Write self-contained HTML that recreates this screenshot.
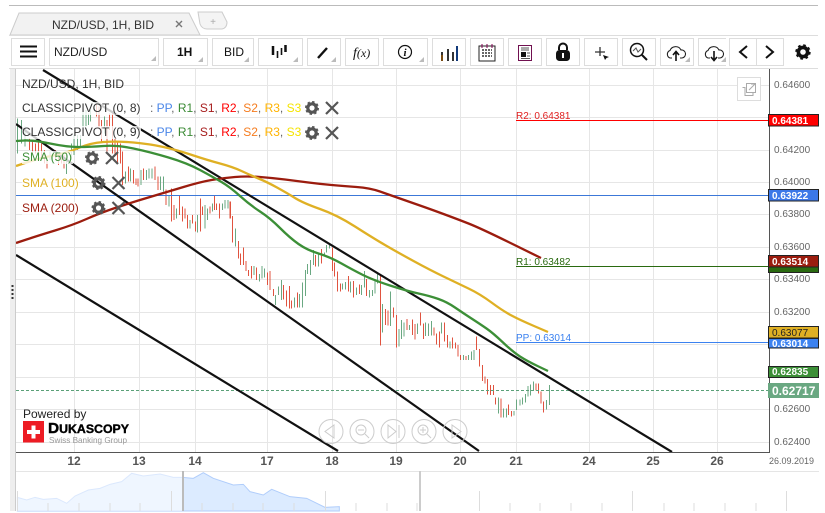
<!DOCTYPE html>
<html>
<head>
<meta charset="utf-8">
<style>
html,body{margin:0;padding:0;background:#fff;width:825px;height:513px;overflow:hidden}
svg{display:block}
text{font-family:"Liberation Sans",Arial,sans-serif}
</style>
</head>
<body>
<svg width="825" height="513" viewBox="0 0 825 513" xmlns="http://www.w3.org/2000/svg">
<defs>
<clipPath id="chart"><rect x="16" y="69" width="753" height="383"/></clipPath>
<g id="gear"><circle r="4.2" fill="none" stroke="#555" stroke-width="3.2"/><circle r="6" fill="none" stroke="#555" stroke-width="2" stroke-dasharray="2.4 2.3"/></g>
<g id="cross"><path d="M-6 -6L6 6M6 -6L-6 6" stroke="#555" stroke-width="2.2" fill="none"/></g>
<path id="tri" d="M0 5L5 5L5 0Z" fill="#bbb"/>
</defs>

<!-- top chrome -->
<rect x="9" y="5" width="809" height="1" fill="#bbb"/>
<path d="M10 35L19 13H189L200 35Z" fill="#f2f2f2" stroke="#ccc"/>
<path d="M198 12H222L227 22Q227 28 222 29H207Q202 29 200 24Z" fill="#f4f4f4" stroke="#ccc"/>
<text x="213" y="25" font-size="10" fill="#aaa" text-anchor="middle">+</text>
<text x="52" y="29" font-size="12" fill="#333">NZD/USD, 1H, BID</text>
<path d="M176 21L182 27M182 21L176 27" stroke="#777" stroke-width="1.4"/>
<rect x="9" y="35" width="809" height="1" fill="#ddd"/>

<!-- toolbar buttons -->
<g fill="#fff" stroke="#ddd">
<rect x="11.5" y="38.5" width="33" height="27"/>
<rect x="49.5" y="38.5" width="109" height="27"/>
<rect x="163.5" y="38.5" width="44" height="27"/>
<rect x="212.5" y="38.5" width="41" height="27"/>
<rect x="258.5" y="38.5" width="44" height="27"/>
<rect x="307.5" y="38.5" width="33" height="27"/>
<rect x="345.5" y="38.5" width="33" height="27"/>
<rect x="383.5" y="38.5" width="44" height="27"/>
<rect x="432.5" y="38.5" width="33" height="27"/>
<rect x="470.5" y="38.5" width="33" height="27"/>
<rect x="508.5" y="38.5" width="33" height="27"/>
<rect x="546.5" y="38.5" width="33" height="27"/>
<rect x="584.5" y="38.5" width="33" height="27"/>
<rect x="622.5" y="38.5" width="33" height="27"/>
<rect x="660.5" y="38.5" width="33" height="27"/>
<rect x="698.5" y="38.5" width="33" height="27"/>
<rect x="729.5" y="38.5" width="27" height="27"/>
<rect x="756.5" y="38.5" width="27" height="27"/>
</g>
<rect x="726" y="38" width="3" height="28" fill="#fff"/>
<rect x="9" y="68" width="809" height="1" fill="#ddd"/>
<use href="#tri" x="151" y="56"/><use href="#tri" x="198" y="57"/><use href="#tri" x="244" y="57"/><use href="#tri" x="293" y="57"/><use href="#tri" x="331" y="57"/><use href="#tri" x="419" y="57"/><use href="#tri" x="685" y="57"/><use href="#tri" x="721" y="57"/>

<path d="M20 46.5H37M20 51.5H37M20 56.5H37" stroke="#111" stroke-width="2"/>
<text x="54" y="56" font-size="12" fill="#222">NZD/USD</text>
<text x="177" y="56" font-size="12" font-weight="bold" fill="#111">1H</text>
<text x="224" y="56" font-size="12" fill="#111">BID</text>
<path d="M273 46V55M285.500 45V52" stroke="#111" stroke-width="2.500"/>
<path d="M277.500 51V58M281.500 48V55" stroke="#111" stroke-width="1.600"/>
<path d="M318 58L327 48" stroke="#111" stroke-width="2.400"/>
<text x="353" y="57" font-size="12" font-style="italic" fill="#111" style="font-family:'Liberation Serif',serif"><tspan font-size="14">f</tspan>(x)</text>
<circle cx="405" cy="52" r="6.500" fill="none" stroke="#111" stroke-width="1.200"/>
<text x="405" y="56" font-size="11" font-style="italic" font-weight="bold" text-anchor="middle" fill="#111" style="font-family:'Liberation Serif',serif">i</text>
<path d="M442 52V61M448 49V61M453 52V61M457 46V61" stroke="#333" stroke-width="2"/>
<path d="M442 55V61" stroke="#7a4a10" stroke-width="2"/><path d="M457 46V61" stroke="#123a7a" stroke-width="2"/>
<rect x="479" y="46" width="16" height="15" fill="#fff" stroke="#222"/>
<path d="M482 44V48M487 44V48M492 44V48" stroke="#800050" stroke-width="1"/>
<path d="M482 50H492M482 53H492M482 56H492" stroke="#333" stroke-width="1.500" stroke-dasharray="2 1"/>
<rect x="518.500" y="45.500" width="13" height="15" fill="#fff" stroke="#701050"/>
<path d="M521 48H529M521 50H529" stroke="#555"/><rect x="521" y="52" width="5" height="5" fill="#111"/><path d="M527 53H530M527 56H530M521 58.500H530" stroke="#555"/>
<path d="M559 50V47.500A4 4 0 0 1 567 47.500V50" fill="none" stroke="#111" stroke-width="2"/>
<rect x="556" y="50" width="14" height="11" rx="3.500" fill="#111"/><rect x="562" y="53" width="2" height="5" fill="#fff"/>
<path d="M600 47V56M595 52H605" stroke="#333" stroke-width="1.300"/><path d="M603 55L609 57L606.500 58L605 60Z" fill="#111"/>
<circle cx="637" cy="50" r="6.500" fill="none" stroke="#111" stroke-width="1.500"/><path d="M642 55L647 60" stroke="#111" stroke-width="2"/><path d="M633 51L636 48L638 52L641 49" fill="none" stroke="#555"/>
<path d="M672 58H670A4 4 0 0 1 670 50.500A6 6 0 0 1 681 50A4 4 0 0 1 682 58H680" fill="none" stroke="#222" stroke-width="1.100"/><path d="M676 61V52M673 55L676 51.500L679 55" fill="none" stroke="#111" stroke-width="1.600"/>
<path d="M710 58H708A4 4 0 0 1 708 50.500A6 6 0 0 1 719 50A4 4 0 0 1 720 58H718" fill="none" stroke="#222" stroke-width="1.100"/><path d="M714 51V60M711 57L714 60.500L717 57" fill="none" stroke="#111" stroke-width="1.600"/>
<path d="M747 46L740 52L747 58" fill="none" stroke="#111" stroke-width="2"/>
<path d="M766 46L773 52L766 58" fill="none" stroke="#111" stroke-width="2"/>
<g transform="translate(803,52)"><circle r="4.600" fill="none" stroke="#111" stroke-width="3.600"/><circle r="6.600" fill="none" stroke="#111" stroke-width="2.200" stroke-dasharray="2.600 2.580"/></g>

<!-- left strip -->
<rect x="10" y="69" width="6" height="442" fill="#eee"/>
<rect x="15" y="69" width="1" height="442" fill="#ccc"/>
<path d="M12.500 285V300" stroke="#333" stroke-width="2" stroke-dasharray="2 2"/>

<!-- grid -->
<g stroke="#e6e6e6" stroke-width="1">
<path d="M16 85.500H769M16 117.500H769M16 150.500H769M16 182.500H769M16 214.500H769M16 247.500H769M16 279.500H769M16 312.500H769M16 344.500H769M16 377.500H769M16 409.500H769M16 442.500H769"/>
<path d="M74.500 69V452M139.500 69V452M195.500 69V452M267.500 69V452M332.500 69V452M396.500 69V452M460.500 69V452M516.500 69V452M589.500 69V452M653.500 69V452M717.500 69V452"/>
</g>

<!-- candles -->
<g clip-path="url(#chart)" shape-rendering="crispEdges" fill="none">
<g transform="translate(0,100) scale(0.33333)" stroke-width="3">
<path stroke="#6aa882" d="M52 55V160M65 60V130M75 80V140M150 155V180M158 160V190M199 165V222M215 130V180M222 105V165M232 105V150M241 105V140M249 35V90M258 30V80M265 40V75M272 30V65M313 50V100M377 215V250M392 205V245M423 210V255M439 210V240M447 205V235M456 205V235M482 230V270M490 230V275M507 285V320M530 325V355M570 360V385M592 345V398M615 315V385M622 325V360M637 310V335M667 310V330M675 300V325M684 300V325M706 385V440"/>
<path stroke="#e0533f" d="M88 115V150M97 125V165M106 130V160M116 125V170M125 130V175M133 150V190M141 170V205M167 150V180M176 165V195M185 170V190M192 165V205M290 5V50M297 20V85M305 60V125M321 60V155M329 40V90M337 35V160M345 115V165M352 125V190M361 130V190M367 155V255M385 200V245M400 210V250M408 235V255M414 235V260M431 205V240M465 200V240M474 230V270M498 268V315M515 265V365M522 315V360M539 287V345M548 320V365M555 325V355M563 345V385M578 345V370M586 365V395M601 295V395M608 320V345M630 320V340M643 287V330M650 310V330M658 310V355M692 305V355"/>
</g>
<g transform="translate(230,170) scale(0.33333)" stroke-width="3">
<path stroke="#6aa882" d="M16 175V230M72 288V315M88 312V335M96 288V325M104 295V322M137 375V405M145 350V375M154 330V390M194 382V413M209 372V413M217 338V413M226 300V378M233 282V312M241 270V315M250 240V285M265 250V290M283 248V258M290 225V248M298 225V235M338 340V358M347 336V358M362 335V368M380 352V375M395 345V375M403 303V352M418 360V382M427 360V378M435 330V370M443 310V340M458 402V488M481 365V468M507 477V530M515 450V507M522 457V500M538 465V480M562 460V492M587 458V498M595 460V498M604 453V497M635 457V490M660 515V535M700 555V570M716 555V570M724 545V570M732 540V570"/>
<path stroke="#e0533f" d="M0 95V145M8 138V218M25 213V265M32 250V285M40 233V285M48 273V303M56 300V318M64 288V325M80 293V330M112 307V345M120 303V360M130 357V378M161 345V388M169 362V410M178 348V415M185 392V415M202 367V413M257 255V290M275 237V280M307 232V303M313 278V320M323 305V365M331 340V365M356 318V365M370 333V382M388 343V372M409 327V378M451 315V527M466 417V465M474 422V466M490 413V442M499 435V533M531 447V480M547 448V495M555 462V508M571 427V466M580 460V507M612 473V497M619 490V523M628 485V532M643 457V515M652 495V532M668 502V535M676 517V535M684 525V560M692 555V570M708 558V570"/>
</g>
<g transform="translate(430,300) scale(0.33333)" stroke-width="3">
<path stroke="#6aa882" d="M205 293V340M221 325V352M229 325V353M252 333V347M260 298V330M270 298V317M278 293V313M286 282V307M294 258V290M302 253V287M310 245V270M349 300V328M358 255V315"/>
<path stroke="#e0533f" d="M139 110V150M148 147V200M157 195V243M165 230V250M173 237V283M181 255V285M190 255V285M197 293V313M213 295V352M236 313V345M244 333V350M318 250V272M326 250V280M333 275V310M340 305V338"/>
</g>
</g>

<!-- level lines -->
<g clip-path="url(#chart)" fill="none">
<path d="M16 195.500H769" stroke="#3c78d8" stroke-width="1"/>
<path d="M516 120.500H769" stroke="#f00" stroke-width="1"/>
<path d="M516 266.500H769" stroke="#2a6a10" stroke-width="1"/>
<path d="M516 342.500H769" stroke="#3b82f0" stroke-width="1"/>
<path d="M16 390.500H769" stroke="#5aa078" stroke-width="1" stroke-dasharray="3 2"/>

<!-- trend lines -->
<path d="M43 70L672 452" stroke="#111" stroke-width="2.200"/>
<path d="M16 124L479 451" stroke="#111" stroke-width="2.200"/>
<path d="M16 255L338 451" stroke="#111" stroke-width="2.200"/>

<!-- MAs -->
<path d="M16 243L26.500 239.500Q37 236 55 230.500Q73 225 86.500 219Q100 213 116.500 207.500Q133 202 150 197Q167 192 183.500 187Q200 182 211.500 180Q223 178 235 177Q247 176 260 177Q273 178 285 179.500Q297 181 308.500 182.500Q320 184 331.500 185Q343 186 356.500 187Q370 188 380 191.500Q390 195 398.500 198Q407 201 418.500 205Q430 209 443.500 214Q457 219 468.500 223.500Q480 228 510.500 243L541 258" stroke="#9b1c0e" stroke-width="2.300"/>
<path d="M16 166L28 162Q40 158 53.500 155.500Q67 153 78.500 148Q90 143 103.500 142Q117 141 133.500 142.500Q150 144 163.500 147Q177 150 192 155Q207 160 220 163.500Q233 167 241.500 171Q250 175 258.500 178.500Q267 182 277 187.500Q287 193 295 198Q303 203 320 209Q337 215 355 226.500Q373 238 385 245Q397 252 413.500 261Q430 270 443.500 276.500Q457 283 468.500 288.500Q480 294 491.500 302.500Q503 311 511.500 315.500Q520 320 534 326L548 332" stroke="#dfb024" stroke-width="2.300"/>
<path d="M16 141L24.500 140.500Q33 140 50 143.500Q67 147 78.500 147Q90 147 103.500 146Q117 145 133.500 148.500Q150 152 168.500 157.500Q187 163 200 170Q213 177 221.500 182Q230 187 240 196Q250 205 260 211.500Q270 218 280 228Q290 238 298.500 244Q307 250 318.500 253.500Q330 257 341.500 263.500Q353 270 363 275Q373 280 390 285.500Q407 291 418.500 293.500Q430 296 438.500 299Q447 302 455 307.500Q463 313 471.500 318.500Q480 324 486.500 328.500Q493 333 503 342.500Q513 352 520 356.500Q527 361 537.500 366L548 371" stroke="#3c8f37" stroke-width="2.300"/>
</g>

<!-- R/PP labels -->
<text x="516" y="119" font-size="10" fill="#e02020">R2: 0.64381</text>
<text x="516" y="265" font-size="10" fill="#2a6a10">R1: 0.63482</text>
<text x="516" y="341" font-size="10" fill="#3b82f0">PP: 0.63014</text>

<!-- axes -->
<path d="M16 452.500H769.500V69" fill="none" stroke="#555" stroke-width="1"/>
<g font-size="10" fill="#666">
<text x="774" y="88">0.64600</text>
<text x="774" y="153">0.64200</text>
<text x="774" y="185">0.64000</text>
<text x="774" y="217">0.63800</text>
<text x="774" y="250">0.63600</text>
<text x="774" y="282">0.63400</text>
<text x="774" y="315">0.63200</text>
<text x="774" y="412">0.62600</text>
<text x="774" y="445">0.62400</text>
</g>

<!-- price tags -->
<g stroke="#222" stroke-width="1">
<rect x="768.500" y="114.500" width="50" height="11.500" fill="#f00"/>
<rect x="768.500" y="189.500" width="50" height="11.500" fill="#3c78e8"/>
<rect x="768.500" y="266.500" width="50" height="6" fill="#2a6a10"/>
<rect x="768.500" y="255.500" width="50" height="11.500" fill="#9b1c0e"/>
<rect x="768.500" y="326.500" width="50" height="11.500" fill="#dfb024"/>
<rect x="768.500" y="338.500" width="50" height="9.500" fill="#3c82f0"/>
<rect x="768.500" y="366.500" width="50" height="11" fill="#3c8f37"/>
</g>
<rect x="768" y="383" width="51" height="15" fill="#6aa882"/>
<g font-size="10" font-weight="bold" fill="#fff">
<text x="772" y="124">0.64381</text>
<text x="772" y="199">0.63922</text>
<text x="772" y="265">0.63514</text>
<text x="772" y="347">0.63014</text>
<text x="772" y="375">0.62835</text>
</g>
<text x="772" y="336" font-size="10" fill="#222">0.63077</text>
<text x="772" y="395" font-size="12" font-weight="bold" fill="#fff">0.62717</text>

<!-- date labels -->
<g font-size="12" font-weight="bold" fill="#555" text-anchor="middle">
<text x="74" y="465">12</text><text x="139" y="465">13</text><text x="195" y="465">14</text><text x="267" y="465">17</text><text x="332" y="465">18</text><text x="396" y="465">19</text><text x="460" y="465">20</text><text x="516" y="465">21</text><text x="589" y="465">24</text><text x="653" y="465">25</text><text x="717" y="465">26</text>
</g>
<text x="769" y="464" font-size="9" fill="#666">26.09.2019</text>

<!-- navigator -->
<rect x="16" y="471" width="803" height="1" fill="#e5e5e5"/>
<g transform="translate(0,390) scale(0.33333)">
<path d="M52 322L80 330L105 322L130 328L170 325L200 340L225 318L265 300L300 295L330 283L365 275L395 250L430 258L480 252L520 262L548 262L580 265L610 248L640 265L700 285L730 283L750 305L790 315L815 298L870 320L920 325L975 352L1018 350V363H52Z" fill="#dcebff" stroke="#b0cdfb" stroke-width="3"/>
</g>
<rect x="16" y="472" width="167" height="39" fill="#fff" opacity="0.550"/>
<path d="M48 503V511M79 503V511M110 503V511M140 503V511M202 503V511M233 503V511M263 503V511M294 503V511M356 503V511M387 503V511M417 503V511M510 503V511M540 503V511M571 503V511M602 503V511M664 503V511M694 503V511M725 503V511M756 503V511M17.500 491V511M171.500 491V511M325.500 491V511M479.500 491V511M632.500 491V511M786.500 491V511" stroke="#ddd" stroke-width="1" fill="none"/>
<rect x="182" y="471" width="2" height="40" fill="#bbb"/>
<rect x="419" y="471" width="2" height="40" fill="#ccc"/>

<!-- popout -->
<rect x="737.500" y="77.500" width="23" height="23" fill="#fff" stroke="#ddd"/>
<path d="M742.500 87.500H745V95.500H753V93" fill="none" stroke="#aaa"/><rect x="746.500" y="83.500" width="9" height="9" fill="none" stroke="#aaa"/><path d="M749 90L755 84M751 84H755.500V88" fill="none" stroke="#aaa"/>

<!-- legend backgrounds: translucent plates that fade the chart behind each row -->
<g fill="#fff" opacity="0.780">
<rect x="22" y="102" width="119" height="13"/>
<rect x="22" y="126" width="119" height="13"/>
<rect x="22" y="151" width="51" height="13"/>
<rect x="22" y="177" width="57" height="13"/>
<rect x="22" y="202" width="57" height="13"/>
</g>

<!-- legend -->
<g font-size="12">
<text x="22" y="88" fill="#333">NZD/USD, 1H, BID</text>
<text x="22" y="112" fill="#333">CLASSICPIVOT (0, 8)</text>
<text x="22" y="136" fill="#333">CLASSICPIVOT (0, 9)</text>
<text x="150" y="112" fill="#666"> : <tspan fill="#4a86e8">PP</tspan>, <tspan fill="#3a8a34">R1</tspan>, <tspan fill="#a61c1c">S1</tspan>, <tspan fill="#f00">R2</tspan>, <tspan fill="#f57c1f">S2</tspan>, <tspan fill="#ffb300">R3</tspan>, <tspan fill="#f5e400">S3</tspan></text>
<text x="150" y="136" fill="#666"> : <tspan fill="#4a86e8">PP</tspan>, <tspan fill="#3a8a34">R1</tspan>, <tspan fill="#a61c1c">S1</tspan>, <tspan fill="#f00">R2</tspan>, <tspan fill="#f57c1f">S2</tspan>, <tspan fill="#ffb300">R3</tspan>, <tspan fill="#f5e400">S3</tspan></text>
<text x="22" y="161" fill="#3c8f37">SMA (50)</text>
<text x="22" y="187" fill="#dfb024">SMA (100)</text>
<text x="22" y="212" fill="#9b1c0e">SMA (200)</text>
</g>
<use href="#gear" x="312" y="108"/><use href="#cross" x="332" y="108"/>
<use href="#gear" x="312" y="133"/><use href="#cross" x="332" y="133"/>
<use href="#gear" x="92" y="158"/><use href="#cross" x="112" y="158"/>
<use href="#gear" x="98.500" y="183"/><use href="#cross" x="118.500" y="183"/>
<use href="#gear" x="98.500" y="208"/><use href="#cross" x="118.500" y="208"/>

<!-- logo -->
<text x="23" y="418" font-size="12" fill="#222">Powered by</text>
<rect x="23" y="421" width="21" height="21.500" fill="#ed1c24"/>
<path d="M31.500 425.500H35.500V430H40V434H35.500V438.500H31.500V434H27V430H31.500Z" fill="#fff"/>
<text x="48" y="433" font-weight="bold" fill="#000" stroke="#000" stroke-width="0.400" textLength="81" lengthAdjust="spacingAndGlyphs"><tspan font-size="15">D</tspan><tspan font-size="12">UKASCOPY</tspan></text>
<text x="49" y="443" font-size="8.500" fill="#999" textLength="78" lengthAdjust="spacingAndGlyphs">Swiss Banking Group</text>

<!-- nav buttons -->
<g fill="none" stroke="#ccc" stroke-width="1">
<circle cx="331" cy="431.500" r="12"/><circle cx="362" cy="431.500" r="12"/><circle cx="393" cy="431.500" r="12"/><circle cx="424" cy="431.500" r="12"/><circle cx="455" cy="431.500" r="12"/>
<path d="M334 425V438L325 431.500Z"/>
<circle cx="361" cy="430" r="5"/><path d="M358 430H364M365 434L369 438"/>
<path d="M388 425V438L396 431.500ZM399 425V438"/>
<circle cx="423" cy="430" r="5"/><path d="M420 430H426M423 427V433M427 434L431 438"/>
<path d="M452 425V438L461 431.500Z"/>
</g>
</svg>
</body>
</html>
